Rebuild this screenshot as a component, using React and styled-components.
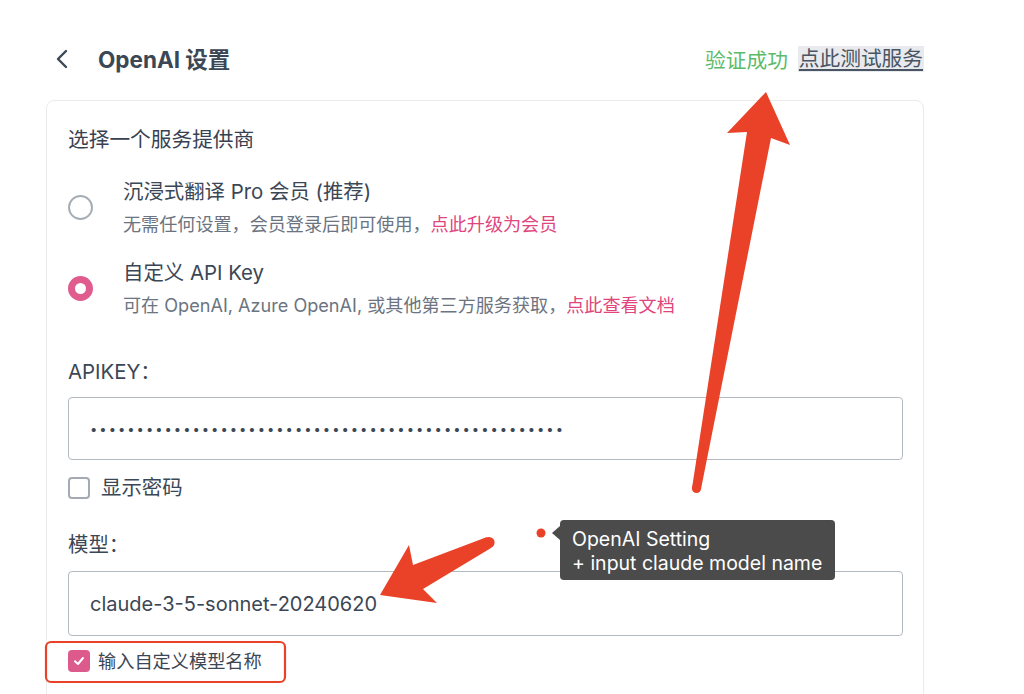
import styled, { createGlobalStyle } from "styled-components";

const GlobalStyle = createGlobalStyle`
  html, body {
    margin: 0;
    padding: 0;
    background: #ffffff;
  }
  body {
    font-family: "Inter", "Noto Sans CJK SC", sans-serif;
    color: #374151;
  }
`;

const Page = styled.div`
  position: relative;
  width: 1024px;
  height: 694px;
  overflow: hidden;
  padding: 37px 0 0 46px;
  box-sizing: border-box;
`;

const Header = styled.div`
  width: 878px;
  height: 43px;
  display: flex;
  align-items: center;
  justify-content: space-between;
`;

const TitleGroup = styled.div`
  display: flex;
  align-items: center;
  gap: 29px;
  padding-left: 9px;
`;

const Back = styled.svg`
  width: 14px;
  height: 20px;
`;

const Title = styled.h1`
  margin: 0 0 2px;
  font-size: 22.5px;
  font-weight: 700;
  color: #3b4754;
`;

const Status = styled.div`
  display: flex;
  align-items: center;
  gap: 10px;
  font-size: 20.7px;
`;

const Success = styled.span`
  color: #5cbb68;
`;

const TestLink = styled.a`
  color: #4a5563;
  background: #e8eaed;
  text-decoration: underline;
  text-underline-offset: 3px;
  padding: 0 1px;
  line-height: 26px;
`;

const Card = styled.div`
  margin-top: 20px;
  width: 878px;
  height: 640px;
  box-sizing: border-box;
  border: 1px solid #eaebed;
  border-radius: 8px;
  padding: 25px 20px 0 21px;
  display: flex;
  flex-direction: column;
`;

const SectionTitle = styled.div`
  font-size: 20.7px;
  line-height: 28px;
`;

const RadioRow = styled.div`
  display: flex;
  align-items: center;
  gap: 30px;
  margin-top: ${(p) => p.$top}px;
`;

const Radio = styled.span`
  width: 25px;
  height: 25px;
  box-sizing: border-box;
  border-radius: 50%;
  flex-shrink: 0;
  ${(p) =>
    p.$checked
      ? `background: #fff; border: 7.5px solid #df5c8d;`
      : `border: 2px solid #a7adb5;`}
`;

const OptionText = styled.div`
  display: flex;
  flex-direction: column;
  gap: 5px;
`;

const OptionTitle = styled.div`
  font-size: 20.4px;
  line-height: 28px;
  color: #3b4754;
`;

const OptionSub = styled.div`
  font-size: 18.1px;
  line-height: 26px;
  color: #6b7480;
`;

const PinkLink = styled.a`
  color: #e0457d;
`;

const Label = styled.div`
  font-size: 20.4px;
  line-height: 28px;
  margin-top: ${(p) => p.$top}px;
  color: #3b4754;
`;

const Field = styled.input`
  margin-top: ${(p) => p.$top}px;
  width: 835px;
  height: ${(p) => p.$h}px;
  box-sizing: border-box;
  border: 1px solid #b3b9c1;
  border-radius: 4px;
  padding: 0 21px;
  font-family: "Inter", "Noto Sans CJK SC", sans-serif;
  font-size: ${(p) => p.$size}px;
  color: #3b4754;
  letter-spacing: ${(p) => p.$spacing || 0}px;
  outline: none;
  background: #fff;
`;

const CheckRow = styled.label`
  display: flex;
  align-items: center;
  gap: ${(p) => p.$gap}px;
  margin-top: ${(p) => p.$top}px;
  font-size: ${(p) => p.$size}px;
  line-height: 28px;
  color: #3b4754;
`;

const Box = styled.span`
  width: 22px;
  height: 22px;
  box-sizing: border-box;
  border-radius: 4px;
  display: flex;
  align-items: center;
  justify-content: center;
  ${(p) =>
    p.$checked
      ? `background: #dd5b8c; border: none;`
      : `border: 2px solid #a3aab3; background: #fff;`}
`;

const Tooltip = styled.div`
  position: absolute;
  left: 560px;
  top: 520px;
  width: 275px;
  height: 60px;
  box-sizing: border-box;
  background: #4b4b4b;
  border-radius: 4px;
  padding: 7px 12px;
  color: #ffffff;
  font-size: 19.5px;
  line-height: 24px;
  white-space: nowrap;
  &::before {
    content: "";
    position: absolute;
    left: -8px;
    top: 6px;
    border-style: solid;
    border-width: 7px 8px 7px 0;
    border-color: transparent #4b4b4b transparent transparent;
  }
`;

const Overlay = styled.svg`
  position: absolute;
  left: 0;
  top: 0;
  width: 1024px;
  height: 694px;
  pointer-events: none;
`;

const RED = "#e94228";

export default function App() {
  return (
    <>
      <GlobalStyle />
      <Page>
        <Header>
          <TitleGroup>
            <Back viewBox="0 0 14 20">
              <path d="M11 2 L3 10 L11 18" fill="none" stroke="#3b4754" strokeWidth="2.4" strokeLinecap="round" strokeLinejoin="round" />
            </Back>
            <Title>OpenAI 设置</Title>
          </TitleGroup>
          <Status>
            <Success>验证成功</Success>
            <TestLink>点此测试服务</TestLink>
          </Status>
        </Header>
        <Card>
          <SectionTitle>选择一个服务提供商</SectionTitle>
          <RadioRow $top={24}>
            <Radio />
            <OptionText>
              <OptionTitle>沉浸式翻译 Pro 会员 (推荐)</OptionTitle>
              <OptionSub>
                无需任何设置，会员登录后即可使用，<PinkLink>点此升级为会员</PinkLink>
              </OptionSub>
            </OptionText>
          </RadioRow>
          <RadioRow $top={22}>
            <Radio $checked />
            <OptionText>
              <OptionTitle>自定义 API Key</OptionTitle>
              <OptionSub>
                可在 OpenAI, Azure OpenAI, 或其他第三方服务获取，<PinkLink>点此查看文档</PinkLink>
              </OptionSub>
            </OptionText>
          </RadioRow>
          <Label $top={40}>APIKEY：</Label>
          <Field $top={11} $h={63} $size={13} $spacing={2} type="password" readOnly value={"x".repeat(51)} />
          <CheckRow $top={14} $gap={11} $size={20.4}>
            <Box />
            显示密码
          </CheckRow>
          <Label $top={29}>模型：</Label>
          <Field $top={12} $h={65} $size={20} type="text" readOnly value="claude-3-5-sonnet-20240620" />
          <CheckRow $top={11} $gap={8} $size={18.2}>
            <Box $checked>
              <svg width="14" height="14" viewBox="0 0 14 14">
                <path d="M3 7.2 L6 10 L11 4" fill="none" stroke="#fff" strokeWidth="2" strokeLinecap="round" strokeLinejoin="round" />
              </svg>
            </Box>
            输入自定义模型名称
          </CheckRow>
        </Card>
        <Tooltip>
          OpenAI Setting
          <br />+ input claude model name
        </Tooltip>
        <Overlay viewBox="0 0 1024 694">
          <rect x="46" y="642" width="239" height="40" rx="5" fill="none" stroke={RED} strokeWidth="2.2" />
          <circle cx="541" cy="533" r="4.5" fill={RED} />
          <polygon points="766,92 790,145 771,138 701,489 692,488 747,132 727,133" fill={RED} />
          <circle cx="696.5" cy="488.5" r="4.6" fill={RED} />
          <polygon points="380,595 409,545 413,565 487,537 491,548 423,589 437,603" fill={RED} />
          <circle cx="489" cy="542.5" r="5.6" fill={RED} />
        </Overlay>
      </Page>
    </>
  );
}
